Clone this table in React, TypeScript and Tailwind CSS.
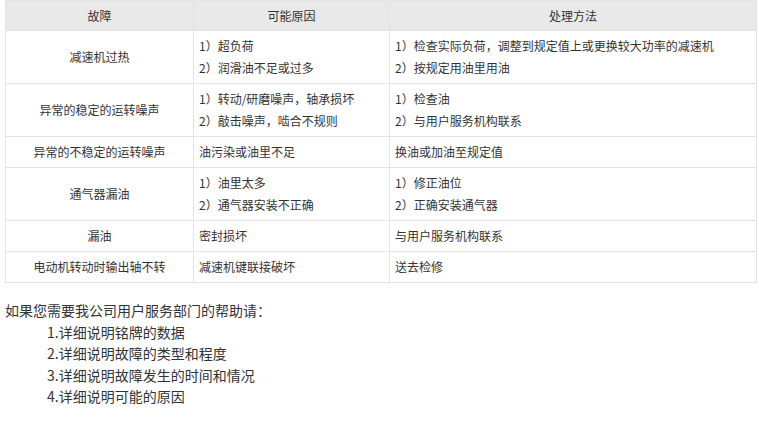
import React from "react";

type Row = { fault: string; causes: string[]; fixes: string[] };

const rows: Row[] = [
  {
    fault: "减速机过热",
    causes: ["1）超负荷", "2）润滑油不足或过多"],
    fixes: ["1）检查实际负荷，调整到规定值上或更换较大功率的减速机", "2）按规定用油里用油"],
  },
  {
    fault: "异常的稳定的运转噪声",
    causes: ["1）转动/研磨噪声，轴承损坏", "2）敲击噪声，啮合不规则"],
    fixes: ["1）检查油", "2）与用户服务机构联系"],
  },
  {
    fault: "异常的不稳定的运转噪声",
    causes: ["油污染或油里不足"],
    fixes: ["换油或加油至规定值"],
  },
  {
    fault: "通气器漏油",
    causes: ["1）油里太多", "2）通气器安装不正确"],
    fixes: ["1）修正油位", "2）正确安装通气器"],
  },
  { fault: "漏油", causes: ["密封损坏"], fixes: ["与用户服务机构联系"] },
  { fault: "电动机转动时输出轴不转", causes: ["减速机键联接破坏"], fixes: ["送去检修"] },
];

const font = { fontFamily: '"SimSun", "Noto Sans CJK SC", "Liberation Sans", sans-serif' };

export default function App() {
  return (
    <div className="bg-white w-[759px] h-[421px] overflow-hidden text-[#333]" style={font}>
      <div className="pl-[5px] pr-[3px]">
        <table className="table-fixed border-collapse w-[751px] text-[12px] leading-[22px]">
          <colgroup>
            <col className="w-[188px]" />
            <col className="w-[196px]" />
            <col className="w-[367px]" />
          </colgroup>
          <thead>
            <tr className="bg-[#e9e9e9]">
              <th className="border border-[#e3e3e3] font-normal text-center h-[30px] py-0">故障</th>
              <th className="border border-[#e3e3e3] font-normal text-center h-[30px] py-0">可能原因</th>
              <th className="border border-[#e3e3e3] font-normal text-center h-[30px] py-0">处理方法</th>
            </tr>
          </thead>
          <tbody>
            {rows.map((r) => (
              <tr key={r.fault}>
                <td className="border border-[#e3e3e3] text-center align-middle py-[4px] px-[5px]">{r.fault}</td>
                <td className="border border-[#e3e3e3] text-left align-middle py-[4px] px-[5px]">
                  {r.causes.map((c) => (
                    <div key={c}>{c}</div>
                  ))}
                </td>
                <td className="border border-[#e3e3e3] text-left align-middle py-[4px] px-[5px]">
                  {r.fixes.map((c) => (
                    <div key={c}>{c}</div>
                  ))}
                </td>
              </tr>
            ))}
          </tbody>
        </table>
        <div className="mt-[17px] text-[14px] leading-[21.5px]">
          <div>如果您需要我公司用户服务部门的帮助请：</div>
          <div className="pl-[42px]">
            <div>1.详细说明铭牌的数据</div>
            <div>2.详细说明故障的类型和程度</div>
            <div>3.详细说明故障发生的时间和情况</div>
            <div>4.详细说明可能的原因</div>
          </div>
        </div>
      </div>
    </div>
  );
}
